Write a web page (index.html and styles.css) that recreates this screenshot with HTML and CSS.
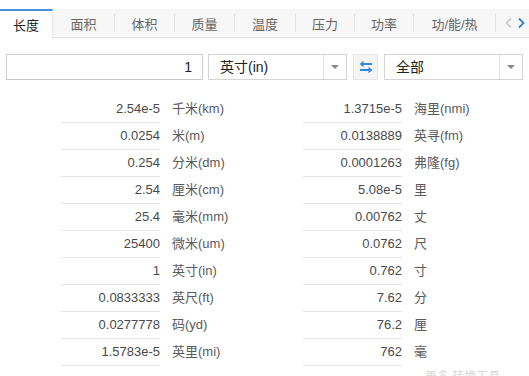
FILE: index.html
```html
<!DOCTYPE html>
<html lang="zh">
<head>
<meta charset="utf-8">
<link rel="stylesheet" href="styles.css">
</head>
<body>
<div class="page">
  <div class="tabs">
    <div class="tab active">长度</div>
    <div class="tab">面积</div>
    <div class="tab">体积</div>
    <div class="tab">质量</div>
    <div class="tab">温度</div>
    <div class="tab">压力</div>
    <div class="tab">功率</div>
    <div class="tab wide">功/能/热</div>
    <div class="tab-arrows">
      <svg width="10" height="12" viewBox="0 0 10 12"><path d="M7 1.5 L2.5 6 L7 10.5" fill="none" stroke="#c8c8c8" stroke-width="1.6"/></svg>
      <svg width="10" height="12" viewBox="0 0 10 12"><path d="M3 1.5 L7.5 6 L3 10.5" fill="none" stroke="#3a7fd5" stroke-width="1.8"/></svg>
    </div>
  </div>

  <div class="controls">
    <div class="num-input">1</div>
    <div class="select unit-select">
      <span class="select-text">英寸(in)</span>
      <span class="select-btn"><i class="caret"></i></span>
    </div>
    <div class="swap">
      <svg width="16" height="14" viewBox="0 0 16 14">
        <path d="M14 4 H3" stroke="#3a87dc" stroke-width="2" fill="none"/>
        <path d="M1.5 4 L5.5 0.8 V7.2 Z" fill="#3a87dc"/>
        <path d="M2 10 H13" stroke="#3a87dc" stroke-width="2" fill="none"/>
        <path d="M14.5 10 L10.5 6.8 V13.2 Z" fill="#3a87dc"/>
      </svg>
    </div>
    <div class="select all-select">
      <span class="select-text">全部</span>
      <span class="select-btn"><i class="caret"></i></span>
    </div>
  </div>

  <div class="results">
    <div class="item"><span class="val">2.54e-5</span><span class="unit">千米(km)</span></div>
    <div class="item"><span class="val">1.3715e-5</span><span class="unit">海里(nmi)</span></div>
    <div class="item"><span class="val">0.0254</span><span class="unit">米(m)</span></div>
    <div class="item"><span class="val">0.0138889</span><span class="unit">英寻(fm)</span></div>
    <div class="item"><span class="val">0.254</span><span class="unit">分米(dm)</span></div>
    <div class="item"><span class="val">0.0001263</span><span class="unit">弗隆(fg)</span></div>
    <div class="item"><span class="val">2.54</span><span class="unit">厘米(cm)</span></div>
    <div class="item"><span class="val">5.08e-5</span><span class="unit">里</span></div>
    <div class="item"><span class="val">25.4</span><span class="unit">毫米(mm)</span></div>
    <div class="item"><span class="val">0.00762</span><span class="unit">丈</span></div>
    <div class="item"><span class="val">25400</span><span class="unit">微米(um)</span></div>
    <div class="item"><span class="val">0.0762</span><span class="unit">尺</span></div>
    <div class="item"><span class="val">1</span><span class="unit">英寸(in)</span></div>
    <div class="item"><span class="val">0.762</span><span class="unit">寸</span></div>
    <div class="item"><span class="val">0.0833333</span><span class="unit">英尺(ft)</span></div>
    <div class="item"><span class="val">7.62</span><span class="unit">分</span></div>
    <div class="item"><span class="val">0.0277778</span><span class="unit">码(yd)</span></div>
    <div class="item"><span class="val">76.2</span><span class="unit">厘</span></div>
    <div class="item"><span class="val">1.5783e-5</span><span class="unit">英里(mi)</span></div>
    <div class="item"><span class="val">762</span><span class="unit">毫</span></div>
  </div>

  <div class="footer">更多 转换工具</div>
</div>
</body>
</html>
```

FILE: styles.css
```css
html, body {
  margin: 0;
  padding: 0;
  background: #fff;
}
body {
  font-family: "Liberation Sans", Arial, "Noto Sans CJK SC", sans-serif;
  font-size: 13px;
  color: #333;
  width: 529px;
  height: 376px;
  overflow: hidden;
}
.page {
  padding-top: 9px;
}

/* tabs */
.tabs {
  display: flex;
  height: 28px;
  background: #f7f7f7;
  border-bottom: 1px solid #e2e2e2;
}
.tab {
  position: relative;
  width: 60px;
  flex: none;
  display: flex;
  align-items: center;
  justify-content: center;
  color: #666;
  font-size: 13px;
  padding-top: 1px;
  border-right: 1px solid #f7f7f7;
  box-sizing: border-box;
}
.tab::after {
  content: "";
  position: absolute;
  right: -1px;
  top: 5px;
  bottom: 5px;
  width: 1px;
  background: #e3e3e3;
}
.tab.active {
  width: 53px;
  background: #fff;
  color: #222;
  border-top: 2px solid #4d8fd8;
  border-right: 1px solid #e8e8e8;
  margin-bottom: -1px;
  padding-top: 0;
}
.tab.active::after { display: none; }
.tab:nth-child(2) { width: 62px; }
.tab:nth-child(5) { width: 61px; }
.tab:nth-child(6) { width: 59px; }
.tab:nth-child(7) { width: 59px; }
.tab.wide { width: 82px; }
.tab-arrows {
  flex: 1;
  display: flex;
  align-items: center;
  justify-content: flex-start;
  padding-left: 8px;
  gap: 2px;
}

/* controls */
.controls {
  display: flex;
  align-items: stretch;
  height: 26px;
  margin-top: 16px;
  padding-left: 6px;
}
.num-input {
  width: 197px;
  box-sizing: border-box;
  border: 1px solid #cfcfcf;
  border-bottom-color: #c4c4c4;
  text-align: right;
  padding-right: 10px;
  line-height: 24px;
  font-size: 14px;
  color: #222;
}
.select {
  display: flex;
  box-sizing: border-box;
  border: 1px solid #d4d4d4;
  margin-left: 5px;
}
.unit-select { width: 139px; }
.all-select { width: 139px; margin-left: 6px; }
.select-text {
  flex: 1;
  padding-left: 11px;
  line-height: 24px;
  font-size: 14px;
  color: #222;
}
.select-btn {
  width: 22px;
  border-left: 1px solid #e0e0e0;
  display: flex;
  align-items: center;
  justify-content: center;
}
.caret {
  width: 0;
  height: 0;
  border-left: 4px solid transparent;
  border-right: 4px solid transparent;
  border-top: 4px solid #8a8a8a;
}
.swap {
  width: 25px;
  margin-left: 6px;
  box-sizing: border-box;
  border: 1px solid #e6e6e6;
  background: #f5f5f5;
  display: flex;
  align-items: center;
  justify-content: center;
}

/* results */
.results {
  display: grid;
  grid-template-columns: 242px 1fr;
  margin-top: 16px;
  padding-left: 61px;
}
.item {
  display: flex;
  height: 27px;
}
.val {
  width: 99px;
  box-sizing: border-box;
  border-bottom: 1px solid #e6e6e6;
  text-align: right;
  line-height: 26px;
  color: #4a4a4a;
  font-size: 13px;
}
.unit {
  margin-left: 12px;
  line-height: 26px;
  color: #5a5a5a;
  font-size: 13px;
}

.footer {
  margin-top: 4px;
  padding-left: 425px;
  color: #d8d8d8;
  font-size: 12px;
  line-height: 14px;
}
```
